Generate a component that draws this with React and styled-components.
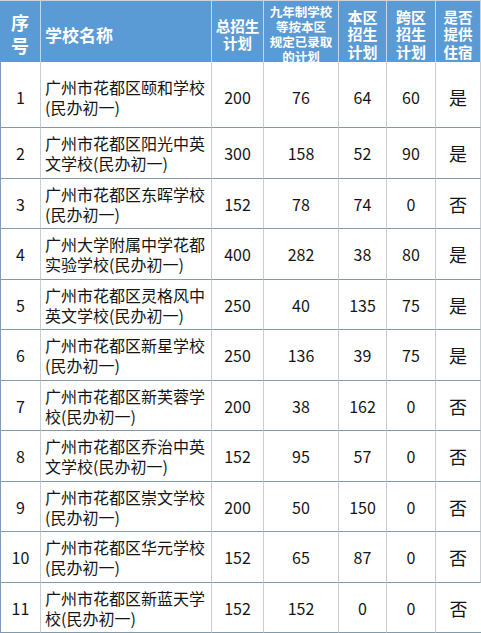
import React from 'react';
import styled, { createGlobalStyle } from 'styled-components';

const GlobalStyle = createGlobalStyle`
  html, body {
    margin: 0;
    padding: 0;
    background: #ffffff;
    overflow: hidden;
  }
  * { box-sizing: border-box; }
`;

const Table = styled.div`
  display: grid;
  grid-template-columns: 41px 171px 52px 75px 48px 49px 45px;
  width: 481px;
  font-family: "Noto Sans CJK SC", "Noto Sans", sans-serif;
  color: #151515;
  border-top: 1px solid #c9d4de;
`;

const HeadCell = styled.div`
  height: 61px;
  background: #5b9bd5;
  color: #ffffff;
  font-weight: 700;
  font-size: ${p => p.size || 15}px;
  line-height: ${p => p.lh || 17}px;
  display: flex;
  flex-direction: column;
  align-items: ${p => (p.left ? 'flex-start' : 'center')};
  justify-content: ${p => (p.top ? 'flex-start' : 'center')};
  padding-top: ${p => (p.top ? 3 : 5)}px;
  padding-left: ${p => (p.left ? '4px' : '0')};
  text-align: center;
  border-right: 1px solid #c3d6ea;
  overflow: hidden;
  white-space: nowrap;

  &:last-child { border-right: none; }
`;

const Cell = styled.div`
  height: ${p => p.h}px;
  border-bottom: 1px solid #8299aa;
  border-right: 1px solid #c9ced3;
  border-left: ${p => (p.first ? '1px solid #7a9cc0' : 'none')};
  display: flex;
  flex-direction: column;
  justify-content: center;
  align-items: ${p => (p.left ? 'flex-start' : 'center')};
  padding-left: ${p => (p.left ? '4px' : '0')};
  padding-top: ${p => p.shift || 0}px;
  font-size: ${p => p.size || 16}px;
  line-height: 20px;
  white-space: nowrap;

  &:last-child { border-right: none; }
`;

const rows = [
  ['1', ['广州市花都区颐和学校', '(民办初一)'], 200, 76, 64, 60, '是'],
  ['2', ['广州市花都区阳光中英', '文学校(民办初一)'], 300, 158, 52, 90, '是'],
  ['3', ['广州市花都区东晖学校', '(民办初一)'], 152, 78, 74, 0, '否'],
  ['4', ['广州大学附属中学花都', '实验学校(民办初一)'], 400, 282, 38, 80, '是'],
  ['5', ['广州市花都区灵格风中', '英文学校(民办初一)'], 250, 40, 135, 75, '是'],
  ['6', ['广州市花都区新星学校', '(民办初一)'], 250, 136, 39, 75, '是'],
  ['7', ['广州市花都区新芙蓉学', '校(民办初一)'], 200, 38, 162, 0, '否'],
  ['8', ['广州市花都区乔治中英', '文学校(民办初一)'], 152, 95, 57, 0, '否'],
  ['9', ['广州市花都区崇文学校', '(民办初一)'], 200, 50, 150, 0, '否'],
  ['10', ['广州市花都区华元学校', '(民办初一)'], 152, 65, 87, 0, '否'],
  ['11', ['广州市花都区新蓝天学', '校(民办初一)'], 152, 152, 0, 0, '否'],
];

const Lines = ({ lines }) => lines.map((l, i) => <span key={i}>{l}</span>);

export default function App() {
  return (
    <>
      <GlobalStyle />
      <Table>
        <HeadCell size={18} lh={23}><Lines lines={['序', '号']} /></HeadCell>
        <HeadCell size={17} left>学校名称</HeadCell>
        <HeadCell size={14.5} lh={17}><Lines lines={['总招生', '计划']} /></HeadCell>
        <HeadCell size={12.5} lh={15} top><Lines lines={['九年制学校', '等按本区', '规定已录取', '的计划']} /></HeadCell>
        <HeadCell size={15} lh={17.5}><Lines lines={['本区', '招生', '计划']} /></HeadCell>
        <HeadCell size={15} lh={17.5}><Lines lines={['跨区', '招生', '计划']} /></HeadCell>
        <HeadCell size={14.5} lh={17.5}><Lines lines={['是否', '提供', '住宿']} /></HeadCell>

        {rows.map((r, i) => {
          const h = i === 0 ? 66 : i % 2 === 1 ? 51 : 50;
          const shift = i === 0 ? 4 : 0;
          return (
            <React.Fragment key={r[0]}>
              <Cell h={h} first shift={shift}>{r[0]}</Cell>
              <Cell h={h} left shift={shift}><Lines lines={r[1]} /></Cell>
              <Cell h={h} shift={shift}>{r[2]}</Cell>
              <Cell h={h} shift={shift}>{r[3]}</Cell>
              <Cell h={h} shift={shift}>{r[4]}</Cell>
              <Cell h={h} shift={shift}>{r[5]}</Cell>
              <Cell h={h} size={18} shift={shift}>{r[6]}</Cell>
            </React.Fragment>
          );
        })}
      </Table>
    </>
  );
}
